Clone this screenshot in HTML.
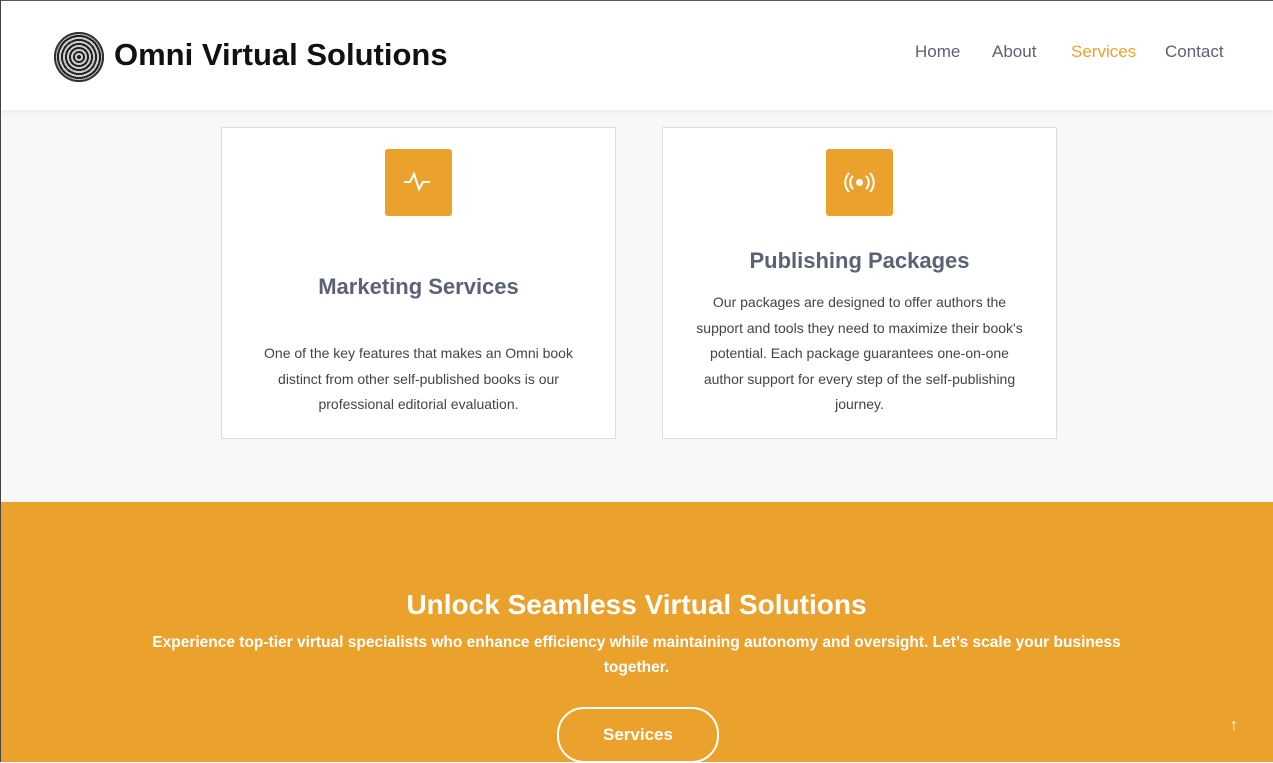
<!DOCTYPE html>
<html><head><style>
body{margin:0;width:1273px;height:762px;overflow:hidden;background:#f8f8f8;font-family:"Liberation Sans",sans-serif;position:relative}
.lb{position:absolute;left:0;top:0;width:1px;height:762px;background:#444;z-index:5}
.hdr{position:absolute;left:0;top:0;width:1273px;height:110px;background:#fff;box-shadow:0 2px 8px rgba(0,0,0,.06);border-top:1px solid #555;box-sizing:border-box;z-index:2}
.logo{position:absolute;left:54px;top:31px;width:50px;height:50px;border-radius:50%;background:repeating-radial-gradient(circle,#222 0 2px,#ccc 2px 4px);box-shadow:inset 0 0 0 2px #333}
.brand{position:absolute;left:114px;top:36px;font-size:31px;font-weight:bold;color:#111}
.nav{position:absolute;top:41px;font-size:17px;color:#5c6170}
.card{position:absolute;top:127px;width:393px;height:310px;background:#fff;border:1px solid #ddd}
.ic{position:absolute;left:163px;top:21px;width:67px;height:67px;background:#eaa22d;border-radius:3px}
.ic svg{display:block}
.card h3{position:absolute;left:0;width:100%;text-align:center;margin:0;font-size:22px;color:#5c6275;font-weight:bold}
.card p{position:absolute;left:0;width:100%;text-align:center;margin:0;font-size:14px;line-height:25.5px;color:#444}
.cta{position:absolute;left:0;top:502px;width:1273px;height:260px;background:#eaa22d;color:#fff;text-align:center}
</style></head><body>
<div class="lb"></div>
<div class="hdr">
<div class="logo"></div>
<div class="brand">Omni Virtual Solutions</div>
<div class="nav" style="left:915px">Home</div>
<div class="nav" style="left:992px">About</div>
<div class="nav" style="left:1071px;color:#eaa22d">Services</div>
<div class="nav" style="left:1165px">Contact</div>
</div>
<div class="card" style="left:221px">
<div class="ic"><svg width="67" height="67" viewBox="0 0 67 67"><path d="M19 33h6l4-8 5 15 4-7h7" fill="none" stroke="#fff" stroke-width="2"/></svg></div>
<h3 style="top:146px">Marketing Services</h3>
<p style="top:213px;padding:0 32px;box-sizing:border-box">One of the key features that makes an Omni book distinct from other self-published books is our professional editorial evaluation.</p>
</div>
<div class="card" style="left:662px">
<div class="ic"><svg width="67" height="67" viewBox="0 0 67 67"><circle cx="33.5" cy="33.5" r="3.5" fill="#fff"/><path d="M27 27a9 9 0 0 0 0 13M40 27a9 9 0 0 1 0 13M23 24a14 14 0 0 0 0 19M44 24a14 14 0 0 1 0 19" fill="none" stroke="#fff" stroke-width="2"/></svg></div>
<h3 style="top:120px">Publishing Packages</h3>
<p style="top:162px;padding:0 26px;box-sizing:border-box">Our packages are designed to offer authors the support and tools they need to maximize their book's potential. Each package guarantees one-on-one author support for every step of the self-publishing journey.</p>
</div>
<div class="cta">
<div style="position:absolute;top:87px;width:100%;font-size:28px;font-weight:bold">Unlock Seamless Virtual Solutions</div>
<div style="position:absolute;top:128px;left:131px;width:1011px;font-size:15.5px;line-height:25px;font-weight:bold">Experience top-tier virtual specialists who enhance efficiency while maintaining autonomy and oversight. Let’s scale your business together.</div>
<div style="position:absolute;left:557px;top:205px;width:158px;height:52px;border:2px solid #fff;border-radius:27px;font-size:17px;font-weight:bold;line-height:52px">Services</div>
<div style="position:absolute;left:1230px;top:215px;font-size:16px">↑</div>
</div>
</body></html>
